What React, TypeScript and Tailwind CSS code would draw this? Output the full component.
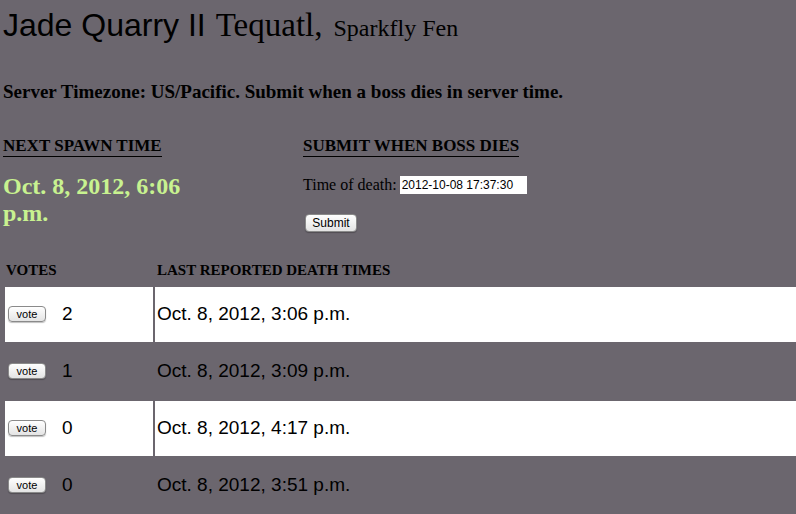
const rows = [
  { votes: 2, time: "Oct. 8, 2012, 3:06 p.m." },
  { votes: 1, time: "Oct. 8, 2012, 3:09 p.m." },
  { votes: 0, time: "Oct. 8, 2012, 4:17 p.m." },
  { votes: 0, time: "Oct. 8, 2012, 3:51 p.m." },
];

const serif = "font-['Liberation_Serif',serif]";
const sans = "font-['Liberation_Sans',Arial,sans-serif]";

function MacButton({ label, className = "" }: { label: string; className?: string }) {
  return (
    <button
      className={`${sans} rounded-[4px] border border-[#8a8a8a] bg-gradient-to-b from-white to-[#e4e4e4] leading-none text-black shadow-[0_1px_1px_rgba(0,0,0,0.25)] ${className}`}
    >
      {label}
    </button>
  );
}

export default function App() {
  return (
    <div className="min-h-[514px] w-[796px] overflow-hidden bg-[#6b666e] text-black">
      <h1 className="flex items-baseline px-[3px] pt-[6px] leading-[38px]">
        <span className={`${sans} text-[32px]`}>Jade Quarry II</span>
        <span className={`${serif} ml-[10px] text-[33px]`}>Tequatl,</span>
        <span className={`${serif} ml-[11px] text-[24px]`}>Sparkfly Fen</span>
      </h1>

      <p className={`${serif} mt-[34px] px-[3px] text-[19px] font-bold leading-[22px]`}>
        Server Timezone: US/Pacific. Submit when a boss dies in server time.
      </p>

      <div className="mt-[30px] flex">
        <div className="w-[300px] px-[3px]">
          <h2 className={`${serif} inline-block border-b border-black text-[17px] font-bold uppercase leading-[20px]`}>
            Next spawn time
          </h2>
          <div className={`${serif} mt-[16px] w-[200px] text-[24px] font-bold leading-[27px] text-[#c8f290]`}>
            Oct. 8, 2012, 6:06 p.m.
          </div>
        </div>
        <div className="px-[3px]">
          <h2 className={`${serif} inline-block border-b border-black text-[17px] font-bold uppercase leading-[20px]`}>
            Submit when boss dies
          </h2>
          <div className="mt-[18px] flex items-center">
            <span className={`${serif} text-[16px] leading-[20px]`}>Time of death:</span>
            <input
              readOnly
              value="2012-10-08 17:37:30"
              className={`${sans} ml-[3px] h-[18px] w-[127px] bg-white px-[2px] text-[12px] text-black outline-none`}
            />
          </div>
          <MacButton label="Submit" className="ml-[2px] mt-[19px] h-[18px] w-[52px] text-[12px]" />
        </div>
      </div>

      <table className="mt-[24px] ml-[3px] w-[800px] table-fixed border-separate border-spacing-[2px]">
        <thead>
          <tr>
            <th className={`${serif} h-[24px] w-[148px] px-[1px] pb-[3px] text-left text-[15px] font-bold uppercase`}>
              Votes
            </th>
            <th className={`${serif} px-[2px] pb-[3px] text-left text-[15px] font-bold uppercase`}>
              Last reported death times
            </th>
          </tr>
        </thead>
        <tbody>
          {rows.map((r, i) => (
            <tr key={i} className={i % 2 === 0 ? "bg-white" : ""}>
              <td className="h-[55px] px-[3px]">
                <div className="flex items-center">
                  <MacButton label="vote" className="h-[16px] w-[38px] text-[11px]" />
                  <span className={`${sans} ml-[16px] text-[19px]`}>{r.votes}</span>
                </div>
              </td>
              <td className={`${sans} px-[2px] text-[19px]`}>{r.time}</td>
            </tr>
          ))}
        </tbody>
      </table>
    </div>
  );
}
